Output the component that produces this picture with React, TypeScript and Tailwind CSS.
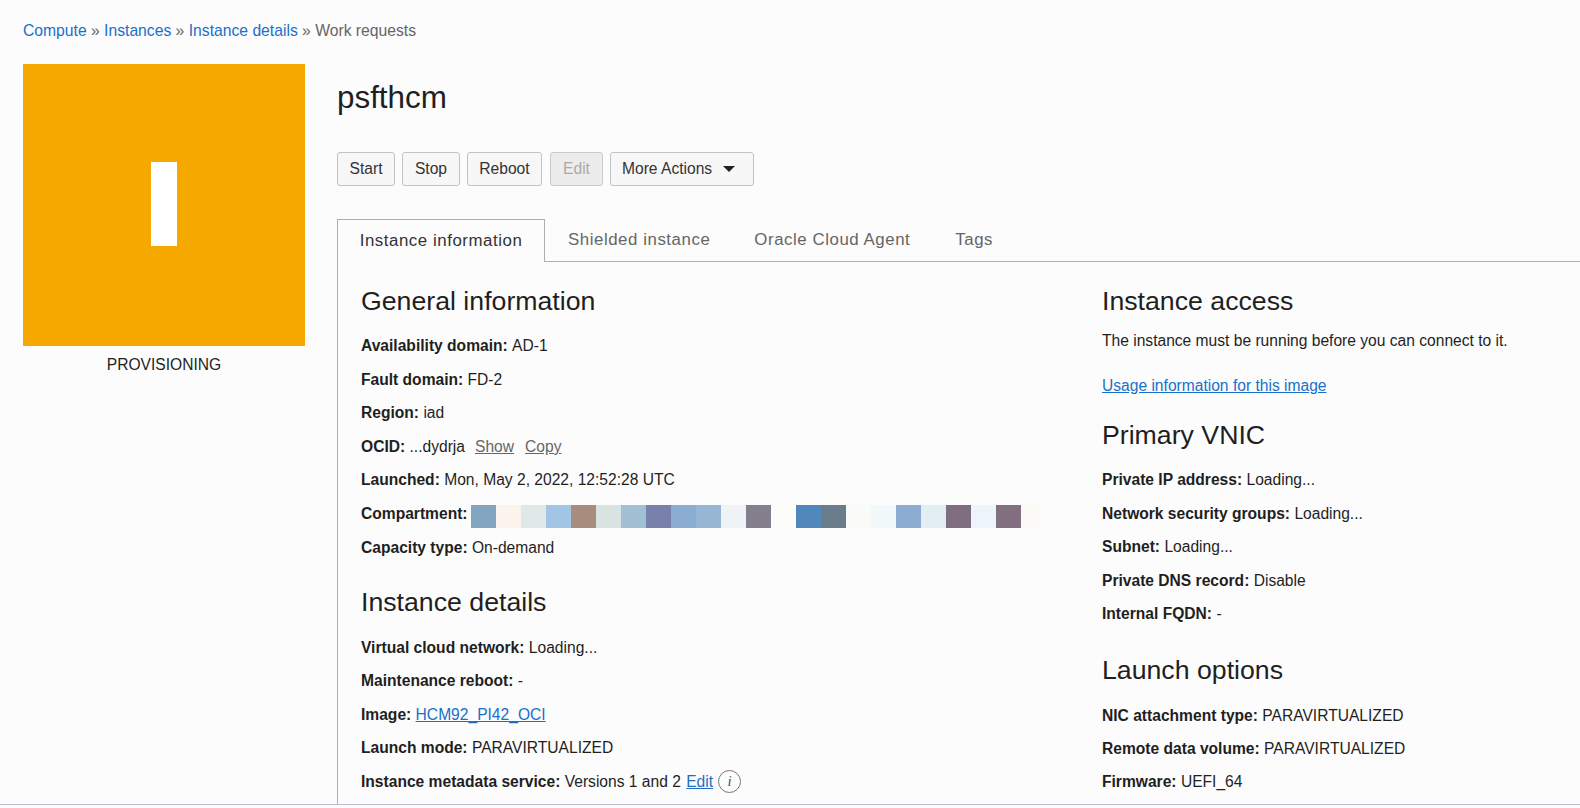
import React from "react";

const swatches = ["#84a5c0","#fbf3ec","#e0e9e8","#a2c4e5","#a88c7e","#d8e3e2","#a2c0d4","#7880ac","#8badd2","#97b6d4","#eff3f8","#837f8d","#fcfcfb","#5088bb","#6a7d8c","#fafbf8","#f2f9fb","#8cacd2","#e3edf4","#7f6e80","#edf4fc","#827080","#fcfaf6"];

function Row({ label, children, className = "h-[33.5px]" }: { label: string; children?: React.ReactNode; className?: string }) {
  return (
    <div className={"flex items-center whitespace-pre " + className}>
      <b className="font-bold">{label} </b>
      {children}
    </div>
  );
}

function H({ children, className = "" }: { children: React.ReactNode; className?: string }) {
  return <h2 className={"text-[26.7px] leading-[32px] text-[#1f1f1f] " + className}>{children}</h2>;
}

const A = ({ children, className = "" }: { children: React.ReactNode; className?: string }) => (
  <a className={"underline " + (className || "text-[#1a6fc9]")}>{children}</a>
);

export default function App() {
  return (
    <div className="h-[808px] w-[1580px] overflow-hidden bg-[#fcfcfc] font-['Liberation_Sans',Arial,sans-serif] text-[15.6px] text-[#1f1f1f]">
      <div className="h-[805px] overflow-hidden border-b border-[#b5bcc9]">
        <nav className="flex h-[64px] items-start pl-[23px] pt-[21px] text-[15.7px] leading-[20px] whitespace-pre text-[#666]">
          <span className="text-[#1a6fc9]">Compute</span> » <span className="text-[#1a6fc9]">Instances</span> » <span className="text-[#1a6fc9]">Instance details</span> » Work requests
        </nav>
        <div className="flex">
          <aside className="ml-[23px] w-[282px] shrink-0">
            <div className="flex h-[282px] items-center justify-center bg-[#f5a800]">
              <div className="mb-[2px] h-[84px] w-[26px] bg-white" />
            </div>
            <div className="mt-[9px] text-center leading-[19px]">PROVISIONING</div>
          </aside>
          <main className="ml-[32px] min-w-0 flex-1">
            <h1 className="mt-[15px] h-[73px] text-[31.4px] leading-[38px] text-[#1f1f1f]">psfthcm</h1>
            <div className="flex gap-[7px] text-[#333]">
              {[["Start","w-[58px]"],["Stop","w-[58px]"],["Reboot","w-[75px]"]].map(([t,w]) => (
                <button key={t} className={"h-[34px] rounded-[3px] border border-[#bfc3c8] bg-[#f7f7f7] " + w}>{t}</button>
              ))}
              <button className="ml-[1px] h-[34px] w-[53px] rounded-[3px] border border-[#c8cacc] bg-[#ececec] text-[#aaa]">Edit</button>
              <button className="flex h-[34px] w-[144px] items-center gap-[11px] rounded-[3px] border border-[#bfc3c8] bg-[#f7f7f7] pl-[11px]">
                More Actions
                <span className="h-0 w-0 border-x-[6px] border-t-[6px] border-x-transparent border-t-[#222]" />
              </button>
            </div>
            <div className="mt-[33px] flex h-[43px] border-b border-[#b0b0b0] text-[16.85px] tracking-[0.55px] text-[#666]">
              <div className="flex h-[43px] w-[208px] items-center justify-center border border-b-0 border-[#aeaeae] bg-[#fcfcfc] text-[#333]">Instance information</div>
              <div className="flex h-[42px] items-center pl-[23px] pr-[22px]">Shielded instance</div>
              <div className="flex h-[42px] items-center pl-[22px] pr-[23px]">Oracle Cloud Agent</div>
              <div className="flex h-[42px] items-center px-[22px]">Tags</div>
            </div>
            <div className="flex h-[600px] border-l border-[#aeaeae] pl-[23px]">
              <section className="w-[741px] shrink-0">
                <H className="mt-[23px] mb-[12px]">General information</H>
                <Row label="Availability domain:">AD-1</Row>
                <Row label="Fault domain:">FD-2</Row>
                <Row label="Region:">iad</Row>
                <Row label="OCID:">...dydrja<A className="ml-[10px] text-[#666]">Show</A><A className="ml-[11px] text-[#666]">Copy</A></Row>
                <Row label="Launched:">Mon, May 2, 2022, 12:52:28 UTC</Row>
                <Row label="Compartment:">
                  <span className="-ml-[1px] mt-[6px] flex">
                    {swatches.map((c, i) => (
                      <span key={i} className={"h-[23px] " + (i === 22 ? "w-[20px]" : "w-[25px]")} style={{ backgroundColor: c }} />
                    ))}
                  </span>
                </Row>
                <Row label="Capacity type:" className="mt-[1px] h-[33.5px]">On-demand</Row>
                <H className="mt-[21px] mb-[13px]">Instance details</H>
                <Row label="Virtual cloud network:">Loading...</Row>
                <Row label="Maintenance reboot:">-</Row>
                <Row label="Image:"><A>HCM92_PI42_OCI</A></Row>
                <Row label="Launch mode:">PARAVIRTUALIZED</Row>
                <Row label="Instance metadata service:">
                  Versions 1 and 2 <A className="ml-[1px] text-[#1a6fc9]">Edit</A>
                  <span className="ml-[5px] inline-flex h-[23px] w-[23px] items-center justify-center rounded-full border border-[#777] font-['Liberation_Serif',serif] text-[15px] italic text-[#555]">i</span>
                </Row>
              </section>
              <section className="min-w-0 flex-1">
                <H className="mt-[23px] mb-[10px]">Instance access</H>
                <p className="leading-[28px]">The instance must be running before you can connect to it.</p>
                <p className="mt-[17px] leading-[28px]"><A>Usage information for this image</A></p>
                <H className="mt-[19px] mb-[12px]">Primary VNIC</H>
                <Row label="Private IP address:">Loading...</Row>
                <Row label="Network security groups:">Loading...</Row>
                <Row label="Subnet:">Loading...</Row>
                <Row label="Private DNS record:">Disable</Row>
                <Row label="Internal FQDN:">-</Row>
                <H className="mt-[23px] mb-[14px]">Launch options</H>
                <Row label="NIC attachment type:" className="h-[33px]">PARAVIRTUALIZED</Row>
                <Row label="Remote data volume:" className="h-[33px]">PARAVIRTUALIZED</Row>
                <Row label="Firmware:" className="h-[33px]">UEFI_64</Row>
              </section>
            </div>
          </main>
        </div>
      </div>
    </div>
  );
}
